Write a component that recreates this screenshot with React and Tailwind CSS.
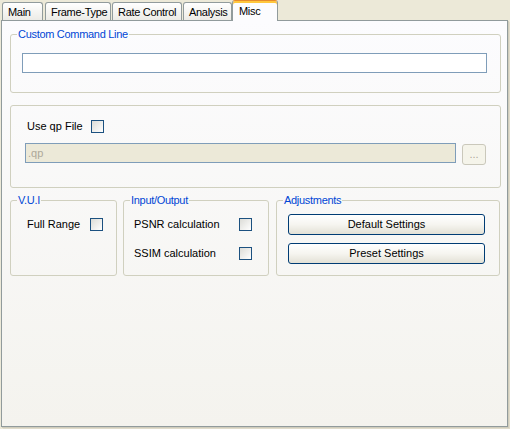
import React from 'react';

const tabs = [
  { label: 'Main', cls: 'ml-[2px] w-[41px]' },
  { label: 'Frame-Type', cls: 'ml-[2px] w-[66px]' },
  { label: 'Rate Control', cls: 'ml-[1px] w-[70px]' },
  { label: 'Analysis', cls: 'ml-[1px] w-[49px]' },
];

const Checkbox = () => (
  <span className="inline-block w-[13px] h-[13px] shrink-0 border border-[#1c5180] bg-gradient-to-br from-[#dcdcd7] to-white" />
);

const Legend = ({ children }) => (
  <legend className="ml-[6px] px-[1px] text-[#0046d5] leading-[13px] tracking-[-0.3px]">{children}</legend>
);

const XpButton = ({ children, className = '' }) => (
  <button className={`flex items-center justify-center w-[197px] h-[21px] rounded-[3px] border border-[#003c74] bg-gradient-to-b from-white via-[#f6f5f0] to-[#e3e1d6] text-black ${className}`}>
    {children}
  </button>
);

const App = () => {
  return (
    <div className="w-[510px] h-[429px] bg-[#ece9d8] font-['Liberation_Sans',Arial,sans-serif] text-[11px] text-black overflow-hidden">
      {/* tab strip */}
      <div className="relative z-10 flex items-end h-[20px] tracking-[-0.3px]">
        {tabs.map((t) => (
          <div
            key={t.label}
            className={`${t.cls} h-[18px] flex items-center pl-[5px] pt-px border border-b-0 border-[#919b9c] rounded-t-[3px] bg-gradient-to-b from-white to-[#ecebe6] whitespace-nowrap`}
          >
            {t.label}
          </div>
        ))}
        <div className="w-[46px] h-[21px] -mb-px flex items-start pl-[6px] pt-[4px] border border-b-0 border-[#919b9c] border-t-[#e68b2c] rounded-t-[3px] bg-[#fcfcfe] shadow-[inset_0_2px_0_#ffc73c] whitespace-nowrap leading-[13px]">
          Misc
        </div>
      </div>

      {/* tab page */}
      <div className="ml-px w-[507px] h-[407px] border border-[#919b9c] bg-gradient-to-b from-[#fcfcfe] to-[#f4f3ee] shadow-[1px_1px_0_#d0cdbd,2px_2px_0_#e0dccb]">
        <fieldset className="ml-[8px] mt-[7px] w-[491px] h-[65px] border border-[#d0d0bf] rounded-[3px]">
          <Legend>Custom Command Line</Legend>
          <div className="pl-[11px]">
            <input className="block mt-[12px] w-[465px] h-[20px] border border-[#7f9db9] bg-white outline-none" />
          </div>
        </fieldset>

        <div className="ml-[8px] mt-[12px] w-[491px] h-[83px] border border-[#d0d0bf] rounded-[3px]">
          <div className="flex items-center h-[13px] mt-[14px] pl-[16px]">
            <span className="w-[64px] leading-[13px]">Use qp File</span>
            <Checkbox />
          </div>
          <div className="flex items-start mt-[10px] pl-[14px]">
            <div className="w-[431px] h-[20px] flex items-center pl-[2px] border border-[#7f9db9] bg-[#ece9d8] text-[#aca899]">
              .qp
            </div>
            <div className="ml-[6px] mt-px w-[24px] h-[21px] flex items-center justify-center rounded-[3px] border border-[#cac8bb] bg-[#f5f4ea] text-[#aca899] leading-none">
              ...
            </div>
          </div>
        </div>

        <div className="flex ml-[8px] mt-[6px]">
          <fieldset className="w-[107px] h-[82px] border border-[#d0d0bf] rounded-[3px]">
            <Legend>V.U.I</Legend>
            <div className="flex items-center h-[13px] mt-[11px] pl-[16px]">
              <span className="w-[63px] leading-[13px]">Full Range</span>
              <Checkbox />
            </div>
          </fieldset>

          <fieldset className="ml-[6px] w-[146px] h-[82px] border border-[#d0d0bf] rounded-[3px]">
            <Legend>Input/Output</Legend>
            <div className="pl-[10px]">
              <div className="flex items-center h-[13px] mt-[11px]">
                <span className="w-[105px] leading-[13px]">PSNR calculation</span>
                <Checkbox />
              </div>
              <div className="flex items-center h-[13px] mt-[16px]">
                <span className="w-[105px] leading-[13px]">SSIM calculation</span>
                <Checkbox />
              </div>
            </div>
          </fieldset>

          <fieldset className="ml-[7px] w-[224px] h-[82px] border border-[#d0d0bf] rounded-[3px]">
            <Legend>Adjustments</Legend>
            <div className="pl-[11px]">
              <XpButton className="mt-[7px]">Default Settings</XpButton>
              <XpButton className="mt-[8px]">Preset Settings</XpButton>
            </div>
          </fieldset>
        </div>
      </div>
    </div>
  );
};

export default App;
